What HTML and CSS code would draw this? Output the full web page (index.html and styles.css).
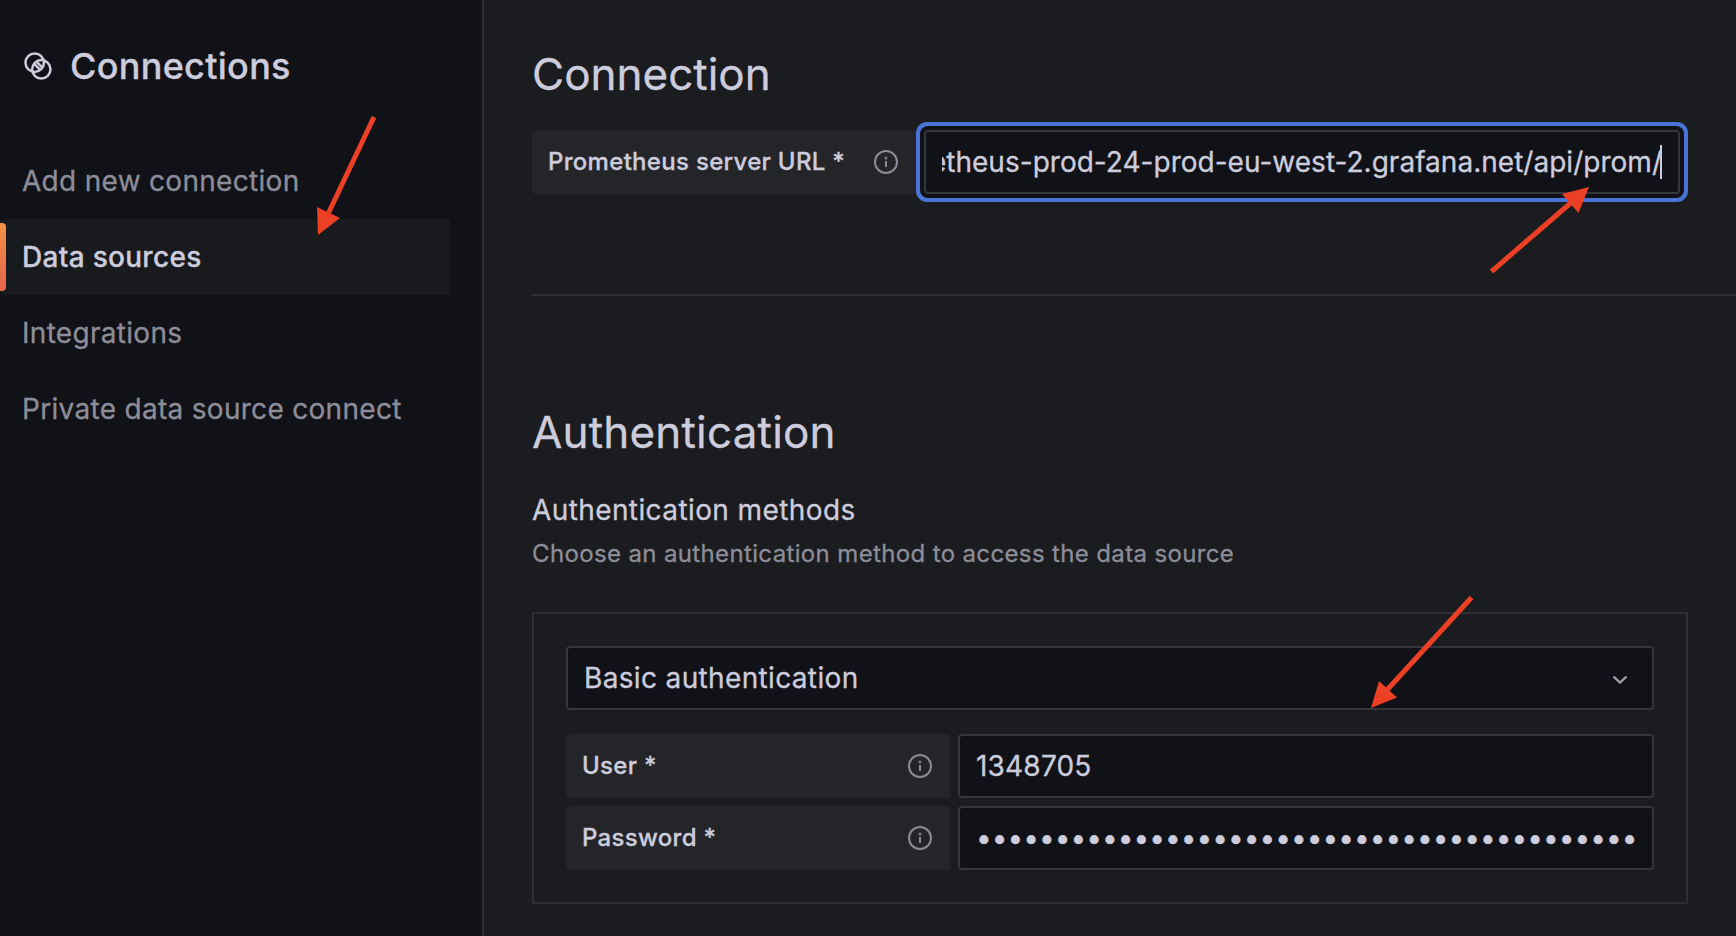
FILE: index.html
```html
<!DOCTYPE html>
<html lang="en">
<head>
<meta charset="utf-8">
<title>Connections</title>
<link rel="stylesheet" href="styles.css">
</head>
<body>
<div class="page">
  <aside class="sidebar">
    <header class="brand">
      <svg class="brand-icon" viewBox="0 0 28 28" fill="none" stroke="currentColor" stroke-width="2.5">
        <circle cx="10.7" cy="10.7" r="9.2"/>
        <circle cx="17.3" cy="17.3" r="9.2"/>
        <path d="M10.7 12.3 15.7 17.3M12.9 10.1 17.9 15.1"/>
      </svg>
      <h1 class="brand-title">Connections</h1>
    </header>
    <nav class="nav">
      <a class="nav-item">Add new connection</a>
      <a class="nav-item active">Data sources</a>
      <a class="nav-item">Integrations</a>
      <a class="nav-item">Private data source connect</a>
    </nav>
  </aside>
  <main class="main">
    <section class="connection">
      <h2 class="heading">Connection</h2>
      <div class="row">
        <div class="label"><span>Prometheus server URL *</span>
          <svg class="info" viewBox="0 0 24 24" fill="none" stroke="currentColor" stroke-width="2" stroke-linecap="round"><circle cx="12" cy="12" r="11"/><path d="M12 11.8v4.4"/><circle cx="12" cy="7.9" r=".5"/></svg>
        </div>
        <div class="input focused"><div class="clip"><span class="url">prometheus-prod-24-prod-eu-west-2.grafana.net/api/prom/</span></div><i class="caret"></i></div>
      </div>
    </section>
    <section class="auth">
      <h2 class="heading wide">Authentication</h2>
      <h3 class="subheading">Authentication methods</h3>
      <p class="hint">Choose an authentication method to access the data source</p>
      <div class="panel">
        <div class="input select"><span>Basic authentication</span>
          <svg class="chevron" viewBox="0 0 14 8" fill="none" stroke="currentColor" stroke-width="2.4" stroke-linecap="round" stroke-linejoin="round"><path d="M1.200 1.200 7 6.600 12.800 1.200"/></svg>
        </div>
        <div class="row">
          <div class="label"><span>User *</span>
            <svg class="info" viewBox="0 0 24 24" fill="none" stroke="currentColor" stroke-width="2" stroke-linecap="round"><circle cx="12" cy="12" r="11"/><path d="M12 11.8v4.4"/><circle cx="12" cy="7.9" r=".5"/></svg>
          </div>
          <div class="input"><span class="number">1348705</span></div>
        </div>
        <div class="row">
          <div class="label"><span>Password *</span>
            <svg class="info" viewBox="0 0 24 24" fill="none" stroke="currentColor" stroke-width="2" stroke-linecap="round"><circle cx="12" cy="12" r="11"/><path d="M12 11.8v4.4"/><circle cx="12" cy="7.9" r=".5"/></svg>
          </div>
          <div class="input"><span class="dots">••••••••••••••••••••••••••••••••••••••••••</span></div>
        </div>
      </div>
    </section>
  </main>
  <svg class="arrows" viewBox="0 0 1736 936">
    <g stroke="#eb4025" stroke-width="5">
      <path d="M374 117 328 214"/>
      <path d="M1491.500 271.500 1573 201"/>
      <path d="M1471.500 597.500 1387 690"/>
    </g>
    <g fill="#eb4025">
      <path d="M318 235 317 207 340 218Z"/>
      <path d="M1589 187 1562 194 1578.500 213Z"/>
      <path d="M1371 708 1379 681 1397 697.500Z"/>
    </g>
  </svg>
</div>
</body>
</html>
```
FILE: styles.css
```css
* { box-sizing: border-box; margin: 0; padding: 0; }

body {
  background: #1b1c1f;
  color: #ccccdc;
  font-family: Inter, "Liberation Sans", sans-serif;
  font-size: 28px;
  -webkit-text-stroke: .3px currentColor;
  overflow: hidden;
}

.page { position: relative; display: flex; height: 936px; }

.sidebar {
  width: 484px;
  flex: none;
  background: #111217;
  border-right: 2px solid #2e2f33;
}

.brand { display: flex; align-items: center; gap: 18px; height: 52px; margin-top: 40px; padding-left: 24px; }
.brand-icon { width: 28px; height: 28px; }
.brand-title { font-size: 36px; font-weight: 500; line-height: 52px; letter-spacing: .3px; }

.nav { margin-top: 51px; width: 450px; }
.nav-item {
  position: relative;
  display: flex;
  align-items: center;
  height: 76px;
  padding-left: 22px;
  color: #8d8d99;
  letter-spacing: .3px;
}
.nav-item.active { background: #191a1d; color: #ccccdc; font-weight: 500; border-radius: 4px; }
.nav-item.active::before {
  content: "";
  position: absolute;
  left: 0;
  top: 4px;
  width: 6px;
  height: 68px;
  border-radius: 0 4px 4px 0;
  background: linear-gradient(#f29147, #e4644a);
}

.main { flex: 1; min-width: 0; padding-left: 48px; }
.connection { height: 296px; padding-top: 48px; border-bottom: 2px solid #2f3034; }
.heading { font-size: 44px; font-weight: 400; line-height: 52px; letter-spacing: 0; }
.heading.wide { letter-spacing: .18px; }
.row { display: flex; gap: 8px; }
.connection .row { margin-top: 30px; width: 1148px; }

.label {
  width: 384px;
  height: 64px;
  flex: none;
  display: flex;
  align-items: center;
  justify-content: space-between;
  padding: 0 18px 0 16px;
  background: #242529;
  border-radius: 4px;
  font-size: 24px;
  font-weight: 500;
  letter-spacing: .3px;
}
.label span { padding-bottom: 2px; }
.info { width: 24px; height: 24px; color: #8d8d99; }

.input {
  flex: 1;
  min-width: 0;
  height: 64px;
  display: flex;
  align-items: center;
  padding: 0 16px;
  background: #111217;
  border: 2px solid #35363b;
  border-radius: 4px;
}
.input.focused { box-shadow: 0 0 0 4px #111217, 0 0 0 8px #4a73d6; }
.clip { flex: 1; min-width: 0; display: flex; justify-content: flex-end; overflow: hidden; margin-right: -2px; }
.url { white-space: nowrap; letter-spacing: .02px; }
.caret { width: 2px; height: 34px; background: #ccccdc; }

.auth { padding-top: 110px; width: 1156px; }
.subheading { margin-top: 34px; font-size: 28px; font-weight: 400; line-height: 36px; letter-spacing: .4px; }
.hint { margin-top: 8px; font-size: 24px; line-height: 36px; color: #8d8d99; letter-spacing: .36px; }

.panel { margin-top: 40px; height: 292px; padding: 32px; border: 2px solid #2e2f33; }
.select { justify-content: space-between; padding-right: 25px; margin-bottom: 24px; letter-spacing: .35px; }
.chevron { width: 14px; height: 8px; margin-top: 4px; color: #9a9aa8; }
.panel .row + .row { margin-top: 8px; }
.number { letter-spacing: .2px; }
.dots { white-space: nowrap; letter-spacing: 0; }

.arrows { position: absolute; inset: 0; width: 1736px; height: 936px; }
```
